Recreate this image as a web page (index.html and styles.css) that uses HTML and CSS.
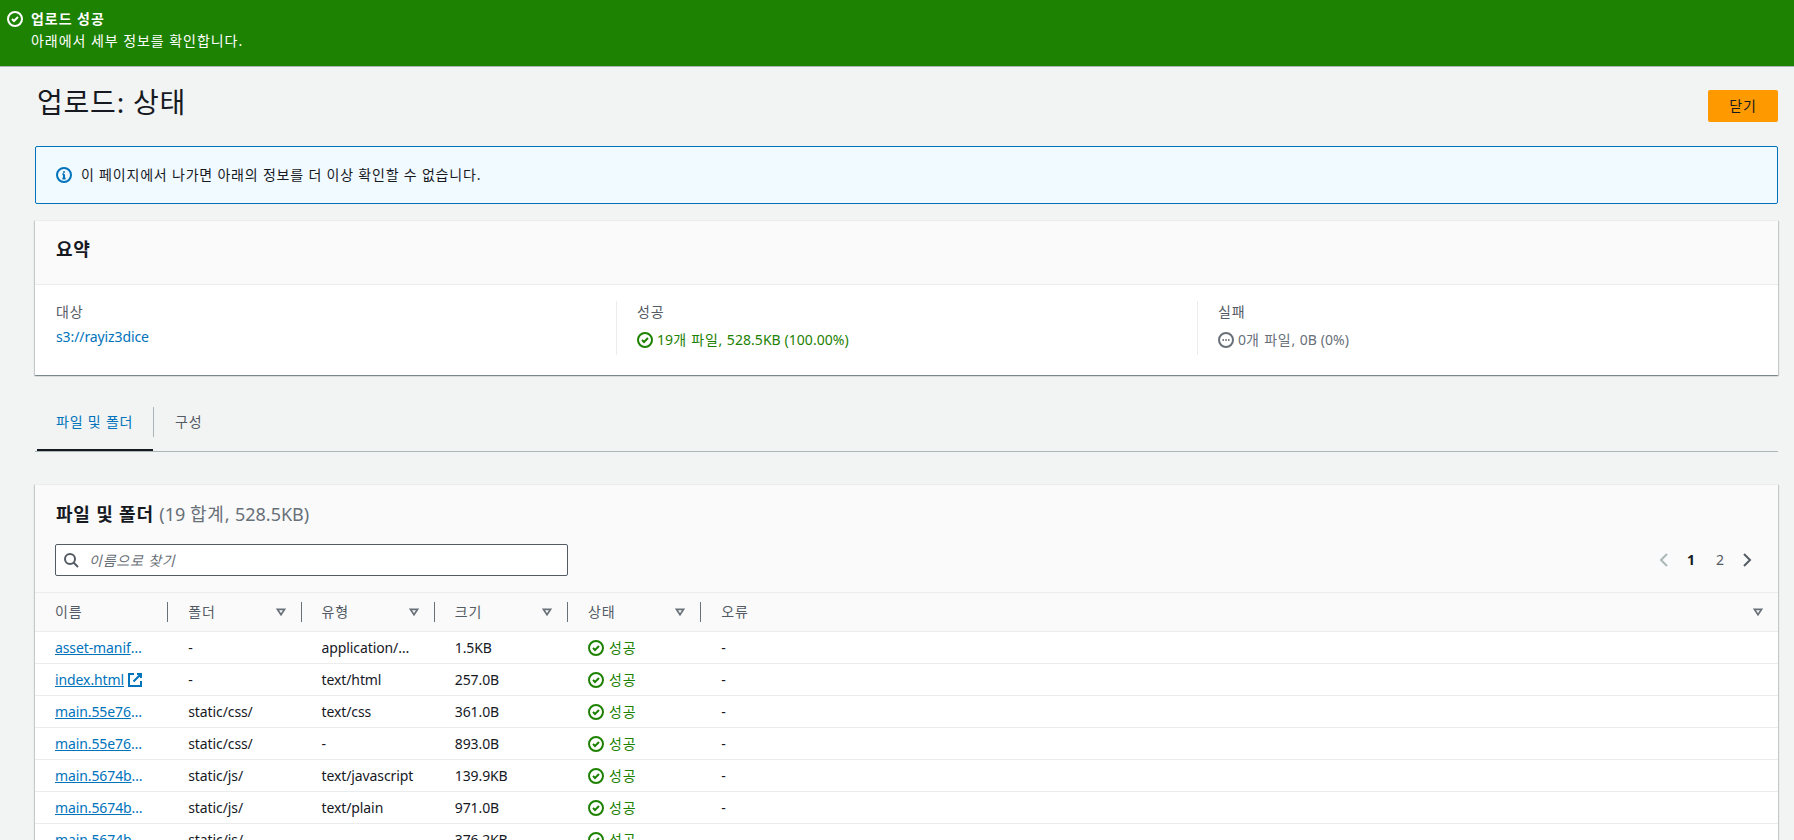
FILE: index.html
```html
<!DOCTYPE html>
<html lang="ko">
<head>
<meta charset="utf-8">
<title>업로드: 상태</title>
<link rel="stylesheet" href="styles.css">
</head>
<body>
<svg class="sprites" width="0" height="0" aria-hidden="true">
  <symbol id="i-ok" viewBox="0 0 16 16"><circle cx="8" cy="8" r="7" fill="none" stroke="currentColor" stroke-width="2"/><path d="M5 8l2 2 4-4" fill="none" stroke="currentColor" stroke-width="2"/></symbol>
  <symbol id="i-info" viewBox="0 0 16 16"><circle cx="8" cy="8" r="7" fill="none" stroke="currentColor" stroke-width="2"/><path d="M8 7.2v4.3M6.4 11.5h3.2M6.4 7.2H8M8 4.2v1.6" fill="none" stroke="currentColor" stroke-width="2"/></symbol>
  <symbol id="i-pending" viewBox="0 0 16 16"><circle cx="8" cy="8" r="7" fill="none" stroke="currentColor" stroke-width="2"/><path d="M4.5 8h1.4M7.3 8h1.4M10.1 8h1.4" fill="none" stroke="currentColor" stroke-width="2"/></symbol>
  <symbol id="i-ext" viewBox="0 0 16 16"><path d="M14 9v5H2V2h5M10 2h4v4M6.5 9.5 14 2" fill="none" stroke="currentColor" stroke-width="2"/></symbol>
  <symbol id="i-search" viewBox="0 0 16 16"><circle cx="7" cy="7" r="5" fill="none" stroke="currentColor" stroke-width="2"/><path d="M15 15l-4.5-4.5" fill="none" stroke="currentColor" stroke-width="2"/></symbol>
  <symbol id="i-sort" viewBox="0 0 16 16"><path d="M4 5h8l-4 6z" fill="none" stroke="currentColor" stroke-width="2"/></symbol>
  <symbol id="i-left" viewBox="0 0 16 16"><path d="M11 2 5 8l6 6" fill="none" stroke="currentColor" stroke-width="2"/></symbol>
  <symbol id="i-right" viewBox="0 0 16 16"><path d="M5 2l6 6-6 6" fill="none" stroke="currentColor" stroke-width="2"/></symbol>
</svg>

<div class="flash">
  <svg class="icon flash-icon"><use href="#i-ok"/></svg>
  <div class="flash-text">
    <div class="flash-title ko">업로드 성공</div>
    <div class="ko">아래에서 세부 정보를 확인합니다.</div>
  </div>
</div>

<main class="page">
  <header class="page-head">
    <h1 class="ko">업로드: 상태</h1>
    <button class="btn-primary ko" type="button">닫기</button>
  </header>

  <div class="alert">
    <svg class="icon alert-icon"><use href="#i-info"/></svg>
    <span class="ko">이 페이지에서 나가면 아래의 정보를 더 이상 확인할 수 없습니다.</span>
  </div>

  <section class="card summary">
    <div class="card-head"><h2 class="ko">요약</h2></div>
    <div class="columns">
      <div class="col">
        <div class="label ko">대상</div>
        <a class="plain-link" href="#">s3://rayiz3dice</a>
      </div>
      <div class="col">
        <div class="label ko">성공</div>
        <div class="status ok"><svg class="icon"><use href="#i-ok"/></svg><span class="nums">19<span class="ko">개 파일,</span> 528.5KB (100.00%)</span></div>
      </div>
      <div class="col">
        <div class="label ko">실패</div>
        <div class="status pending"><svg class="icon"><use href="#i-pending"/></svg><span class="nums">0<span class="ko">개 파일,</span> 0B (0%)</span></div>
      </div>
    </div>
  </section>

  <nav class="tabs">
    <a class="tab active ko" href="#">파일 및 폴더</a>
    <a class="tab ko" href="#">구성</a>
  </nav>

  <section class="card files">
    <div class="files-head">
      <h2 class="ko">파일 및 폴더 <span class="count">(19 <span class="ko">합계,</span> 528.5KB)</span></h2>
      <div class="toolbar">
        <label class="search">
          <svg class="icon"><use href="#i-search"/></svg>
          <input class="ko" type="text" placeholder="이름으로 찾기">
        </label>
        <div class="pager">
          <svg class="icon off"><use href="#i-left"/></svg>
          <span class="num cur">1</span>
          <span class="num next">2</span>
          <svg class="icon"><use href="#i-right"/></svg>
        </div>
      </div>
    </div>
    <table class="grid">
      <thead>
        <tr>
          <th><span class="ko">이름</span></th>
          <th><span class="ko">폴더</span><svg class="icon sort"><use href="#i-sort"/></svg></th>
          <th><span class="ko">유형</span><svg class="icon sort"><use href="#i-sort"/></svg></th>
          <th><span class="ko">크기</span><svg class="icon sort"><use href="#i-sort"/></svg></th>
          <th><span class="ko">상태</span><svg class="icon sort"><use href="#i-sort"/></svg></th>
          <th class="last"><span class="ko">오류</span><svg class="icon sort"><use href="#i-sort"/></svg></th>
        </tr>
      </thead>
      <tbody>
        <tr><td><a class="file" href="#">asset-manifest.json</a></td><td>-</td><td><span class="clip">application/json</span></td><td>1.5KB</td><td><span class="status ok"><svg class="icon"><use href="#i-ok"/></svg><span class="ko">성공</span></span></td><td>-</td></tr>
        <tr><td><a class="file short" href="#">index.html</a><svg class="icon ext"><use href="#i-ext"/></svg></td><td>-</td><td>text/html</td><td>257.0B</td><td><span class="status ok"><svg class="icon"><use href="#i-ok"/></svg><span class="ko">성공</span></span></td><td>-</td></tr>
        <tr><td><a class="file" href="#">main.55e76a1c.css</a></td><td>static/css/</td><td>text/css</td><td>361.0B</td><td><span class="status ok"><svg class="icon"><use href="#i-ok"/></svg><span class="ko">성공</span></span></td><td>-</td></tr>
        <tr><td><a class="file" href="#">main.55e76a1c.css.map</a></td><td>static/css/</td><td>-</td><td>893.0B</td><td><span class="status ok"><svg class="icon"><use href="#i-ok"/></svg><span class="ko">성공</span></span></td><td>-</td></tr>
        <tr><td><a class="file" href="#">main.5674b2f0.js</a></td><td>static/js/</td><td>text/javascript</td><td>139.9KB</td><td><span class="status ok"><svg class="icon"><use href="#i-ok"/></svg><span class="ko">성공</span></span></td><td>-</td></tr>
        <tr><td><a class="file" href="#">main.5674b2f0.js.LICENSE.txt</a></td><td>static/js/</td><td>text/plain</td><td>971.0B</td><td><span class="status ok"><svg class="icon"><use href="#i-ok"/></svg><span class="ko">성공</span></span></td><td>-</td></tr>
        <tr><td><a class="file" href="#">main.5674b2f0.js.map</a></td><td>static/js/</td><td>-</td><td>376.2KB</td><td><span class="status ok"><svg class="icon"><use href="#i-ok"/></svg><span class="ko">성공</span></span></td><td>-</td></tr>
      </tbody>
    </table>
  </section>
</main>
</body>
</html>
```
FILE: styles.css
```css
* { box-sizing: border-box; }
html, body { margin: 0; height: 100%; overflow: hidden; }
body {
  background: #f2f3f3;
  color: #16191f;
  font-family: "Noto Sans", "Noto Sans CJK KR", sans-serif;
  font-size: 14px;
  line-height: 22px;
  letter-spacing: -0.1px;
}
.ko { letter-spacing: 0.8px; }
.nums { letter-spacing: 0.05px; }
.sprites { position: absolute; }
.icon { width: 16px; height: 16px; flex: none; display: block; }

.flash {
  display: flex;
  height: 67px;
  padding: 8px 7px 0;
  gap: 8px;
  background: #1d8102;
  border-bottom: 1px solid #aab7b8;
  color: #fff;
}
.flash .ko { letter-spacing: 0.95px; }
.flash-icon { margin-top: 3px; }
.flash-title { font-weight: 700; }

.page { padding: 0 16px 0 35px; }
.page-head {
  display: flex;
  justify-content: space-between;
  align-items: flex-start;
  height: 79px;
  padding-top: 23px;
}
h1 { margin: -6px 0 0 2px; font-size: 28px; line-height: 36px; font-weight: 400; }
.btn-primary {
  width: 70px;
  height: 32px;
  border: 0;
  border-radius: 2px;
  background: #ff9900;
  color: #16191f;
  font: inherit;
  padding: 0;
}

.alert {
  display: flex;
  align-items: center;
  gap: 9px;
  height: 58px;
  padding: 0 20px;
  border: 1px solid #0073bb;
  border-radius: 2px;
  background: #f1faff;
}
.alert-icon { color: #0073bb; }

.card {
  background: #fff;
  border-top: 1px solid #eaeded;
  box-shadow: 0 1px 1px 0 rgba(0,28,36,.3), 1px 1px 1px 0 rgba(0,28,36,.15), -1px 1px 1px 0 rgba(0,28,36,.15);
}
h2 { margin: 0; font-size: 18px; line-height: 22px; font-weight: 700; }
.summary { margin-top: 16px; height: 155px; }
.card-head {
  height: 64px;
  padding: 17px 21px 0;
  background: #fafafa;
  border-bottom: 1px solid #eaeded;
}
.columns {
  display: grid;
  grid-template-columns: 581px 581px 1fr;
  padding: 16px 0 0;
}
.col { height: 54px; padding: 0 20px; border-left: 1px solid #eaeded; }
.col:first-child { border-left: 0; padding-left: 21px; }
.label { color: #545b64; }
.plain-link { color: #0073bb; text-decoration: none; display: block; margin-top: 3px; }
.status { display: flex; align-items: center; gap: 4px; }
.columns .status { margin-top: 6px; }
.ok { color: #1d8102; }
.pending { color: #687078; }

.tabs {
  display: flex;
  margin-top: 32px;
  height: 45px;
  border-bottom: 1px solid #aab7b8;
  padding-left: 2px;
}
.tab {
  position: relative;
  display: block;
  height: 44px;
  padding: 4px 0 0 19px;
  color: #545b64;
  text-decoration: none;
  white-space: nowrap;
}
.tab.active {
  width: 116px;
  color: #0073bb;
  border-bottom: 2px solid #16191f;
  margin-bottom: -1px;
  height: 44px;
}
.tab.active::after {
  content: "";
  position: absolute;
  right: -1px;
  top: 0;
  height: 30px;
  border-right: 1px solid #aab7b8;
}
.tab:last-child { padding-left: 22px; }

.files { margin-top: 32px; background: #fafafa; height: 500px; }
.files-head { height: 108px; padding: 18px 20px 0 21px; border-bottom: 1px solid #eaeded; }
.count { font-weight: 400; color: #687078; letter-spacing: 0; }
.toolbar { display: flex; justify-content: space-between; margin-top: 19px; }
.search {
  position: relative;
  display: block;
  width: 513px;
  height: 32px;
  margin-left: -1px;
  background: #fff;
  border: 1px solid #545b64;
  border-radius: 2px;
}
.search .icon { position: absolute; left: 7px; top: 7px; color: #545b64; }
.search input {
  width: 100%;
  height: 30px;
  border: 0;
  outline: 0;
  background: transparent;
  padding: 0 8px 0 33px;
  font: italic 14px "Noto Sans", "Noto Sans CJK KR", sans-serif;
  color: #16191f;
}
.search input::placeholder { color: #687078; opacity: 1; }
.pager { display: flex; align-items: center; height: 32px; color: #545b64; padding-right: 3px; }
.pager .off { color: #aab7b8; }
.num { width: 28px; text-align: center; color: #545b64; }
.num.cur { color: #16191f; font-weight: 700; margin: 0 1px 0 5px; }
.num.next { margin-right: 5px; }

.grid { width: 100%; border-collapse: collapse; table-layout: fixed; }
.grid th, .grid td { padding: 0 10px 0 20px; overflow: hidden; white-space: nowrap; text-overflow: ellipsis; text-align: left; }
.grid th { position: relative; width: 133.25px; height: 38px; font-weight: 400; color: #545b64; border-bottom: 1px solid #eaeded; }
.grid th.last { width: auto; }
.grid th::after {
  content: "";
  position: absolute;
  right: 0;
  top: 9px;
  height: 20px;
  border-right: 1px solid #687078;
}
.grid th.last::after { display: none; }
.sort { position: absolute; right: 14px; top: 12px; color: #687078; width: 14px; height: 14px; }
.grid th.last .sort { right: 13px; }
.grid tbody tr { height: 32px; background: #fff; }
.grid td { padding-top: 1px; border-bottom: 1px solid #eaeded; }
.grid td .status { display: flex; gap: 5px; }
.file { display: block; max-width: 91px; overflow: hidden; text-overflow: ellipsis; color: #0073bb; text-decoration: underline; }
.file.short { display: inline; }
.ext { display: inline-block; vertical-align: -3px; margin-left: 3px; color: #0073bb; }
.clip { display: block; width: 88px; overflow: hidden; text-overflow: ellipsis; }
```
